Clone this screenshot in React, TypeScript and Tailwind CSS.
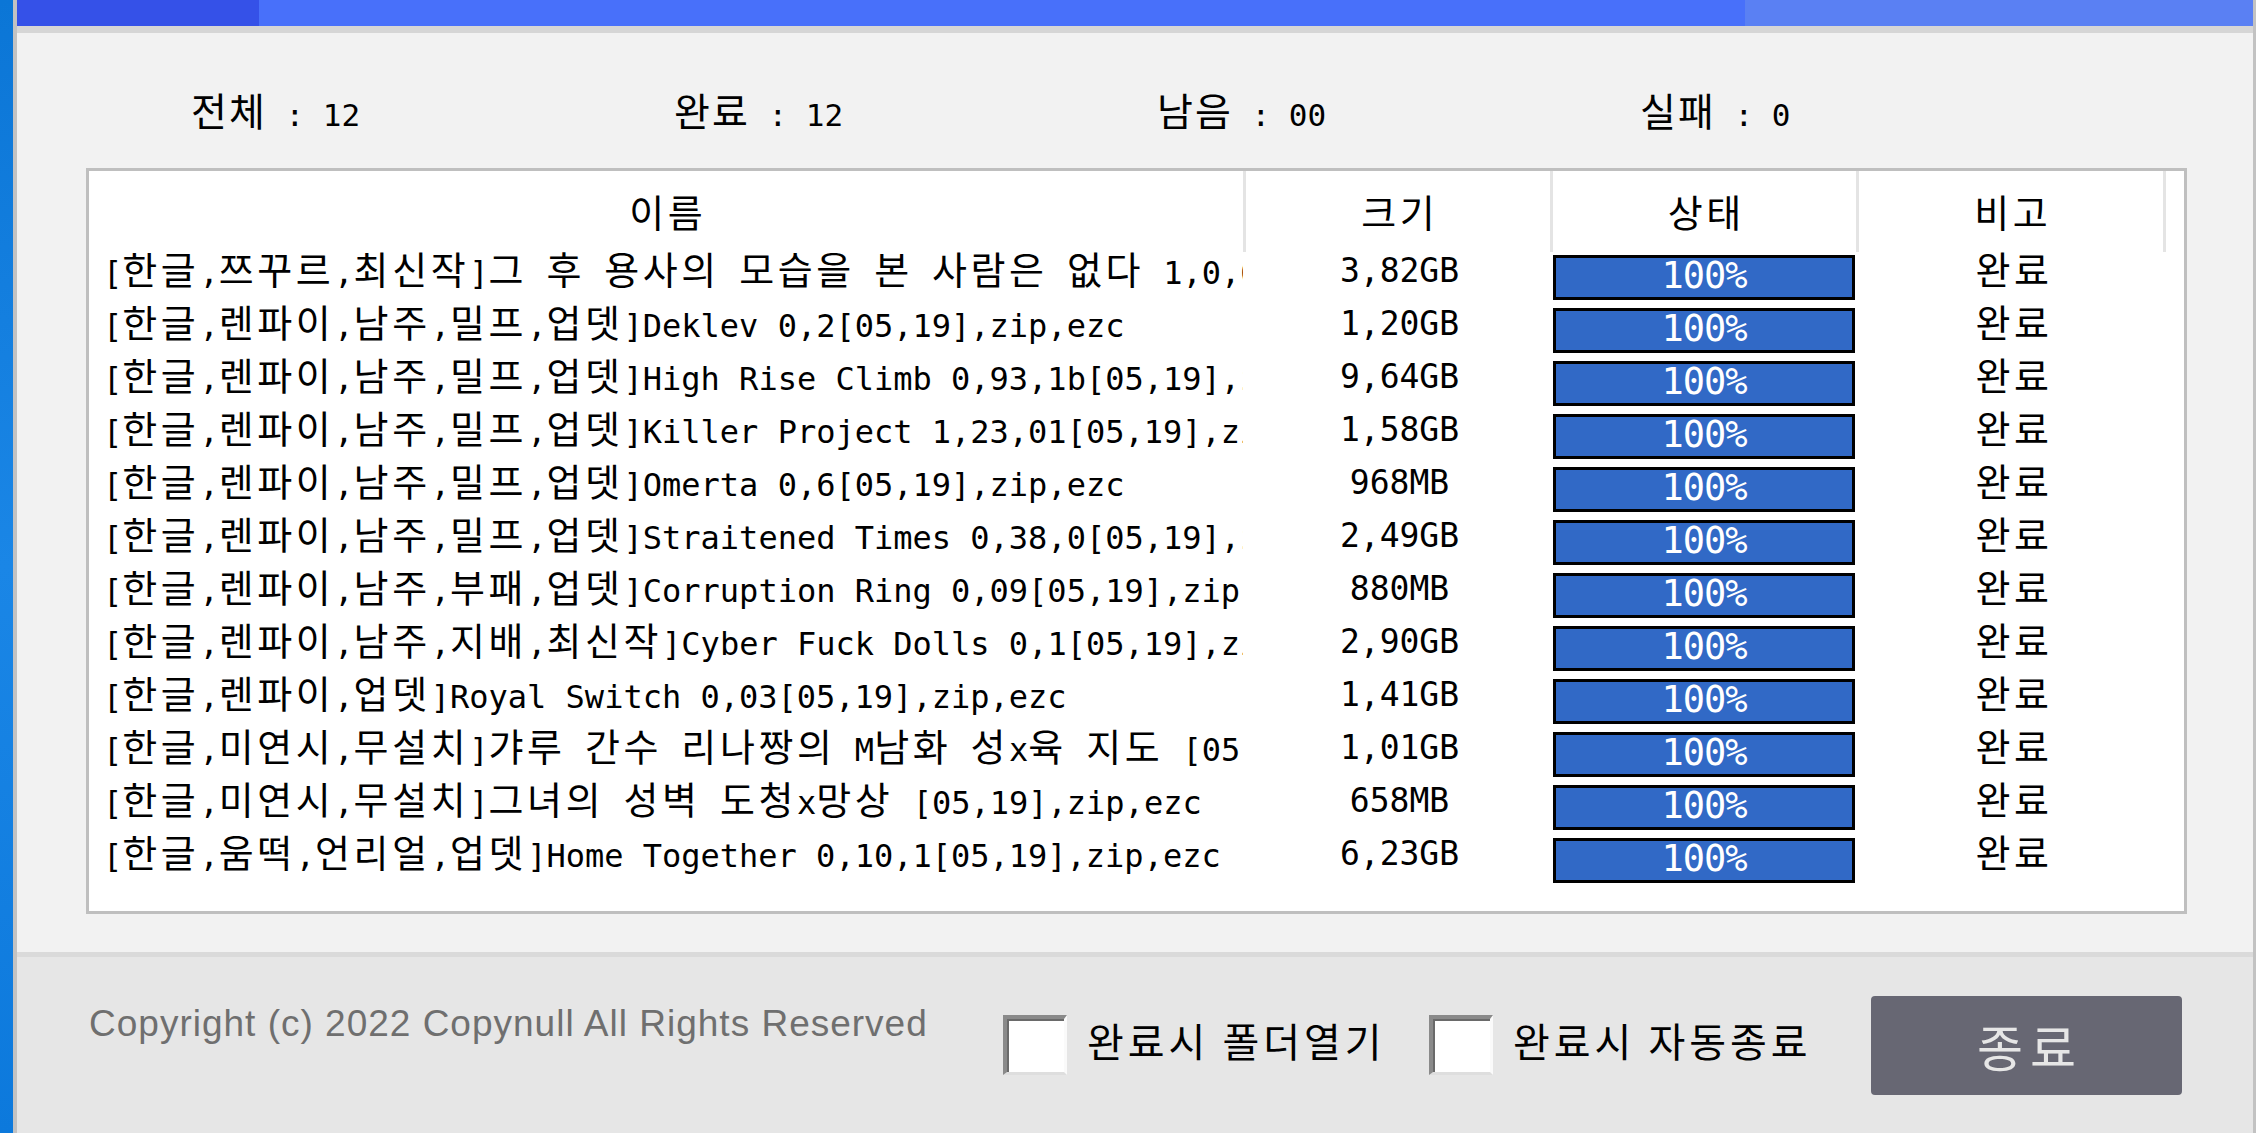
import React from "react";

const KO_RE = /[\u3130-\u318F\uAC00-\uD7AF]/;
const SPLIT_RE = /[\u3130-\u318F\uAC00-\uD7AF]+|[^\u3130-\u318F\uAC00-\uD7AF]+/g;

function Mixed({ text, ko, en }: { text: string; ko: string; en: string }) {
  const parts = text.match(SPLIT_RE) ?? [];
  return (
    <>
      {parts.map((p, i) =>
        KO_RE.test(p) ? (
          <span key={i} className={ko}>
            {p}
          </span>
        ) : (
          <span key={i} className={en}>
            {p}
          </span>
        )
      )}
    </>
  );
}

const KO38 = "font-['Noto_Sans_CJK_KR',sans-serif] text-[38px] tracking-[3.6px]";
const EN32 = "font-['DejaVu_Sans_Mono',monospace] text-[32px]";
const KO40 = "font-['Noto_Sans_CJK_KR',sans-serif] text-[40px] tracking-[4px]";
const EN31 = "font-['DejaVu_Sans_Mono',monospace] text-[31px]";

const rows: [string, string][] = [
  ["[한글,쯔꾸르,최신작]그 후 용사의 모습을 본 사람은 없다 1,0,0[05,19],zip,ezc", "3,82GB"],
  ["[한글,렌파이,남주,밀프,업뎃]Deklev 0,2[05,19],zip,ezc", "1,20GB"],
  ["[한글,렌파이,남주,밀프,업뎃]High Rise Climb 0,93,1b[05,19],zip,ezc", "9,64GB"],
  ["[한글,렌파이,남주,밀프,업뎃]Killer Project 1,23,01[05,19],zip,ezc", "1,58GB"],
  ["[한글,렌파이,남주,밀프,업뎃]Omerta 0,6[05,19],zip,ezc", "968MB"],
  ["[한글,렌파이,남주,밀프,업뎃]Straitened Times 0,38,0[05,19],zip,ezc", "2,49GB"],
  ["[한글,렌파이,남주,부패,업뎃]Corruption Ring 0,09[05,19],zip,ezc", "880MB"],
  ["[한글,렌파이,남주,지배,최신작]Cyber Fuck Dolls 0,1[05,19],zip,ezc", "2,90GB"],
  ["[한글,렌파이,업뎃]Royal Switch 0,03[05,19],zip,ezc", "1,41GB"],
  ["[한글,미연시,무설치]갸루 간수 리나짱의 M남화 성x육 지도 [05,19],zip,ezc", "1,01GB"],
  ["[한글,미연시,무설치]그녀의 성벽 도청x망상 [05,19],zip,ezc", "658MB"],
  ["[한글,움떡,언리얼,업뎃]Home Together 0,10,1[05,19],zip,ezc", "6,23GB"],
];

const stats = ["전체 : 12", "완료 : 12", "남음 : 00", "실패 : 0"];

function Checkbox() {
  return (
    <div className="w-[64px] h-[60px] shrink-0 bg-white border-t-4 border-l-4 border-t-[#8a8a8a] border-l-[#8a8a8a] border-r-[3px] border-b-[3px] border-r-[#fafafa] border-b-[#dedede] shadow-[inset_2px_2px_0_#6a6a6a]" />
  );
}

function HeadCell({ label, cls }: { label: string; cls: string }) {
  return (
    <div className={cls}>
      <span className="font-['Noto_Sans_CJK_KR',sans-serif] text-[38px] tracking-[3.6px] pl-[3.6px]">{label}</span>
    </div>
  );
}

export default function App() {
  return (
    <div className="w-[2256px] h-[1133px] flex overflow-hidden bg-[#f2f2f2] text-black">
      {/* desktop strip */}
      <div className="w-[13px] h-full bg-gradient-to-b from-[#0b76d6] via-[#1a86e6] to-[#0c79dc]" />
      {/* window */}
      <div className="w-[2243px] h-full flex flex-col border-l-4 border-r-[3px] border-[#c2c2c2]">
        {/* title band */}
        <div className="h-[26px] flex">
          <div className="w-[242px] bg-[#3551e8]" />
          <div className="w-[1486px] bg-[#4870fa]" />
          <div className="flex-1 bg-[#5a80f3]" />
        </div>
        <div className="h-[7px] bg-[#d6d6d6]" />

        {/* main */}
        <div className="h-[919px] bg-[#f2f2f2] flex flex-col">
          {/* stats */}
          <div className="pt-[52px] pl-[174px] flex h-[100px]">
            {stats.map((s) => (
              <div key={s} className="w-[483px] h-[48px] leading-[48px] whitespace-pre font-['Noto_Sans_CJK_KR',sans-serif] text-[39px]">
                <Mixed text={s} ko="font-['Noto_Sans_CJK_KR',sans-serif] text-[39px] tracking-[2px]" en={EN31} />
              </div>
            ))}
          </div>

          {/* table */}
          <div className="ml-[69px] mt-[35px] w-[2101px] h-[746px] border-[3px] border-[#bfbfbf] bg-white flex flex-col">
            {/* header */}
            <div className="h-[81px] flex shrink-0">
              <HeadCell label="이름" cls="w-[1154px] flex items-center justify-center pb-[3px]" />
              <HeadCell label="크기" cls="w-[307px] border-l-[3px] border-[#e4e4e4] flex items-center justify-center pb-[3px]" />
              <HeadCell label="상태" cls="w-[306px] border-l-[3px] border-[#e4e4e4] flex items-center justify-center pb-[3px]" />
              <HeadCell label="비고" cls="w-[307px] border-l-[3px] border-[#e4e4e4] flex items-center justify-center pb-[3px]" />
              <div className="flex-1 border-l-[3px] border-[#e4e4e4]" />
            </div>
            {/* rows */}
            {rows.map(([name, size], i) => (
              <div key={i} className="h-[53px] flex shrink-0">
                <div className="w-[1154px] overflow-hidden pl-[14px]">
                  <div className="-mt-[4px] leading-[40px] whitespace-pre font-['Noto_Sans_CJK_KR',sans-serif] text-[38px]">
                    <Mixed text={name} ko={KO38} en={EN32} />
                  </div>
                </div>
                <div className="w-[307px] flex justify-center">
                  <div className="-mt-[6px] leading-[40px] whitespace-pre font-['Noto_Sans_CJK_KR',sans-serif] text-[38px] pl-[6px]">
                    <span className="font-['DejaVu_Sans_Mono',monospace] text-[33px]">{size}</span>
                  </div>
                </div>
                <div className="w-[306px] pl-[3px] pt-[3px]">
                  <div className="w-[302px] h-[45px] border-[3px] border-black bg-[#3169c6] flex items-center justify-center">
                    <span className="font-['DejaVu_Sans_Mono',monospace] text-[37px] leading-none tracking-[-1px] text-white -mt-[4px]">
                      100%
                    </span>
                  </div>
                </div>
                <div className="w-[307px] flex justify-center">
                  <div className="-mt-[4px] leading-[40px] whitespace-pre font-['Noto_Sans_CJK_KR',sans-serif] text-[38px] tracking-[3.6px] pl-[9px]">
                    완료
                  </div>
                </div>
                <div className="flex-1" />
              </div>
            ))}
          </div>
        </div>

        {/* footer */}
        <div className="h-[181px] border-t-[5px] border-[#dadada] bg-[#e6e6e6] flex items-center pl-[72px]">
          <div className="w-[914px] shrink-0 self-start mt-[46px] font-['Liberation_Sans',Arial,sans-serif] text-[37px] leading-[42px] tracking-[1px] text-[#6f6f6f] whitespace-nowrap">
            Copyright (c) 2022 Copynull All Rights Reserved
          </div>
          <Checkbox />
          <div className="w-[362px] shrink-0 pl-[20px] whitespace-pre leading-[48px]">
            <Mixed text="완료시 폴더열기" ko={KO40} en={KO40} />
          </div>
          <Checkbox />
          <div className="w-[378px] shrink-0 pl-[20px] whitespace-pre leading-[48px]">
            <Mixed text="완료시 자동종료" ko={KO40} en={KO40} />
          </div>
          <div className="w-[311px] h-[99px] shrink-0 rounded-[4px] bg-[#676773] flex items-center justify-center">
            <span className="font-['Noto_Sans_CJK_KR',sans-serif] text-[50px] tracking-[7px] text-[#e6e6e6] leading-none pl-[7px]">
              종료
            </span>
          </div>
        </div>
      </div>
    </div>
  );
}
